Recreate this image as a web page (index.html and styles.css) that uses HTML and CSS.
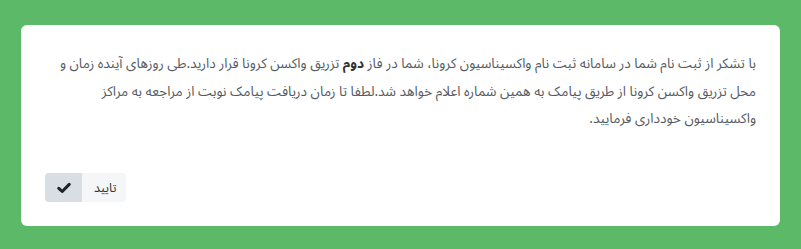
FILE: index.html
```html
<!DOCTYPE html>
<html lang="fa" dir="rtl">
<head>
    <meta charset="UTF-8">
    <meta name="viewport" content="width=device-width, initial-scale=1.0">
    <title>ثبت نام واکسیناسیون کرونا</title>
    <link rel="stylesheet" href="styles.css">
</head>
<body>
    <div class="backdrop">
        <main class="page">
            <section class="message-card">
                <p class="message-text">با تشکر از ثبت نام شما در سامانه ثبت نام واکسیناسیون کرونا، شما در فاز <strong>دوم</strong> تزریق واکسن کرونا قرار دارید.طی روزهای آینده زمان و<br>محل تزریق واکسن کرونا از طریق پیامک به همین شماره اعلام خواهد شد.لطفا تا زمان دریافت پیامک نوبت از مراجعه به مراکز<br>واکسیناسیون خودداری فرمایید.</p>
                <div class="actions">
                    <a href="#" class="confirm-btn">
                        <span class="confirm-label">تایید</span>
                        <span class="confirm-icon">
                            <svg width="14" height="12" viewBox="0 0 14 12">
                                <path d="M1.8 6.3 L5.2 9.5 L12.2 2.4" fill="none" stroke="#1f2329" stroke-width="3" stroke-linecap="round" stroke-linejoin="round"/>
                            </svg>
                        </span>
                    </a>
                </div>
            </section>
        </main>
    </div>
</body>
</html>
```

FILE: styles.css
```css
/* Estilos generales */
html, body {
    margin: 0;
    padding: 0;
}

body {
    background-color: #5cb968;
    font-family: "Noto Sans Arabic", "Noto Sans", "DejaVu Sans", sans-serif;
    color: #555;
}

/* Fondo con onda decorativa */
.backdrop {
    position: relative;
    height: 249px;
    overflow: hidden;
}

.backdrop::before,
.backdrop::after {
    content: "";
    position: absolute;
    border-radius: 50%;
    pointer-events: none;
}

.backdrop::before {
    width: 1400px;
    height: 700px;
    left: 520px;
    top: 228px;
    background: rgba(255, 255, 255, 0.06);
}

.backdrop::after {
    width: 1000px;
    height: 500px;
    left: 690px;
    top: 236px;
    background: rgba(255, 255, 255, 0.08);
}

.page {
    padding: 25px 21px;
    position: relative;
    z-index: 1;
}

/* Tarjeta del mensaje */
.message-card {
    background-color: #ffffff;
    border-radius: 6px;
    height: 201px;
    box-sizing: border-box;
    padding: 25px 24px 24px;
    display: flex;
    flex-direction: column;
}

.message-text {
    margin: 0;
    font-size: 13.6px;
    line-height: 27.5px;
    white-space: nowrap;
    color: #555b61;
}

.message-text strong {
    color: #333;
}

/* Botón de confirmación */
.actions {
    margin-top: auto;
    display: flex;
    justify-content: flex-end;
}

.confirm-btn {
    display: flex;
    height: 29px;
    border-radius: 4px;
    overflow: hidden;
    text-decoration: none;
    background-color: #f5f6f8;
}

.confirm-label {
    display: flex;
    align-items: center;
    padding: 0 10px 0 12px;
    font-size: 12.5px;
    color: #333;
}

.confirm-icon {
    width: 37px;
    display: flex;
    align-items: center;
    justify-content: center;
    background-color: #d9dee5;
}
```
